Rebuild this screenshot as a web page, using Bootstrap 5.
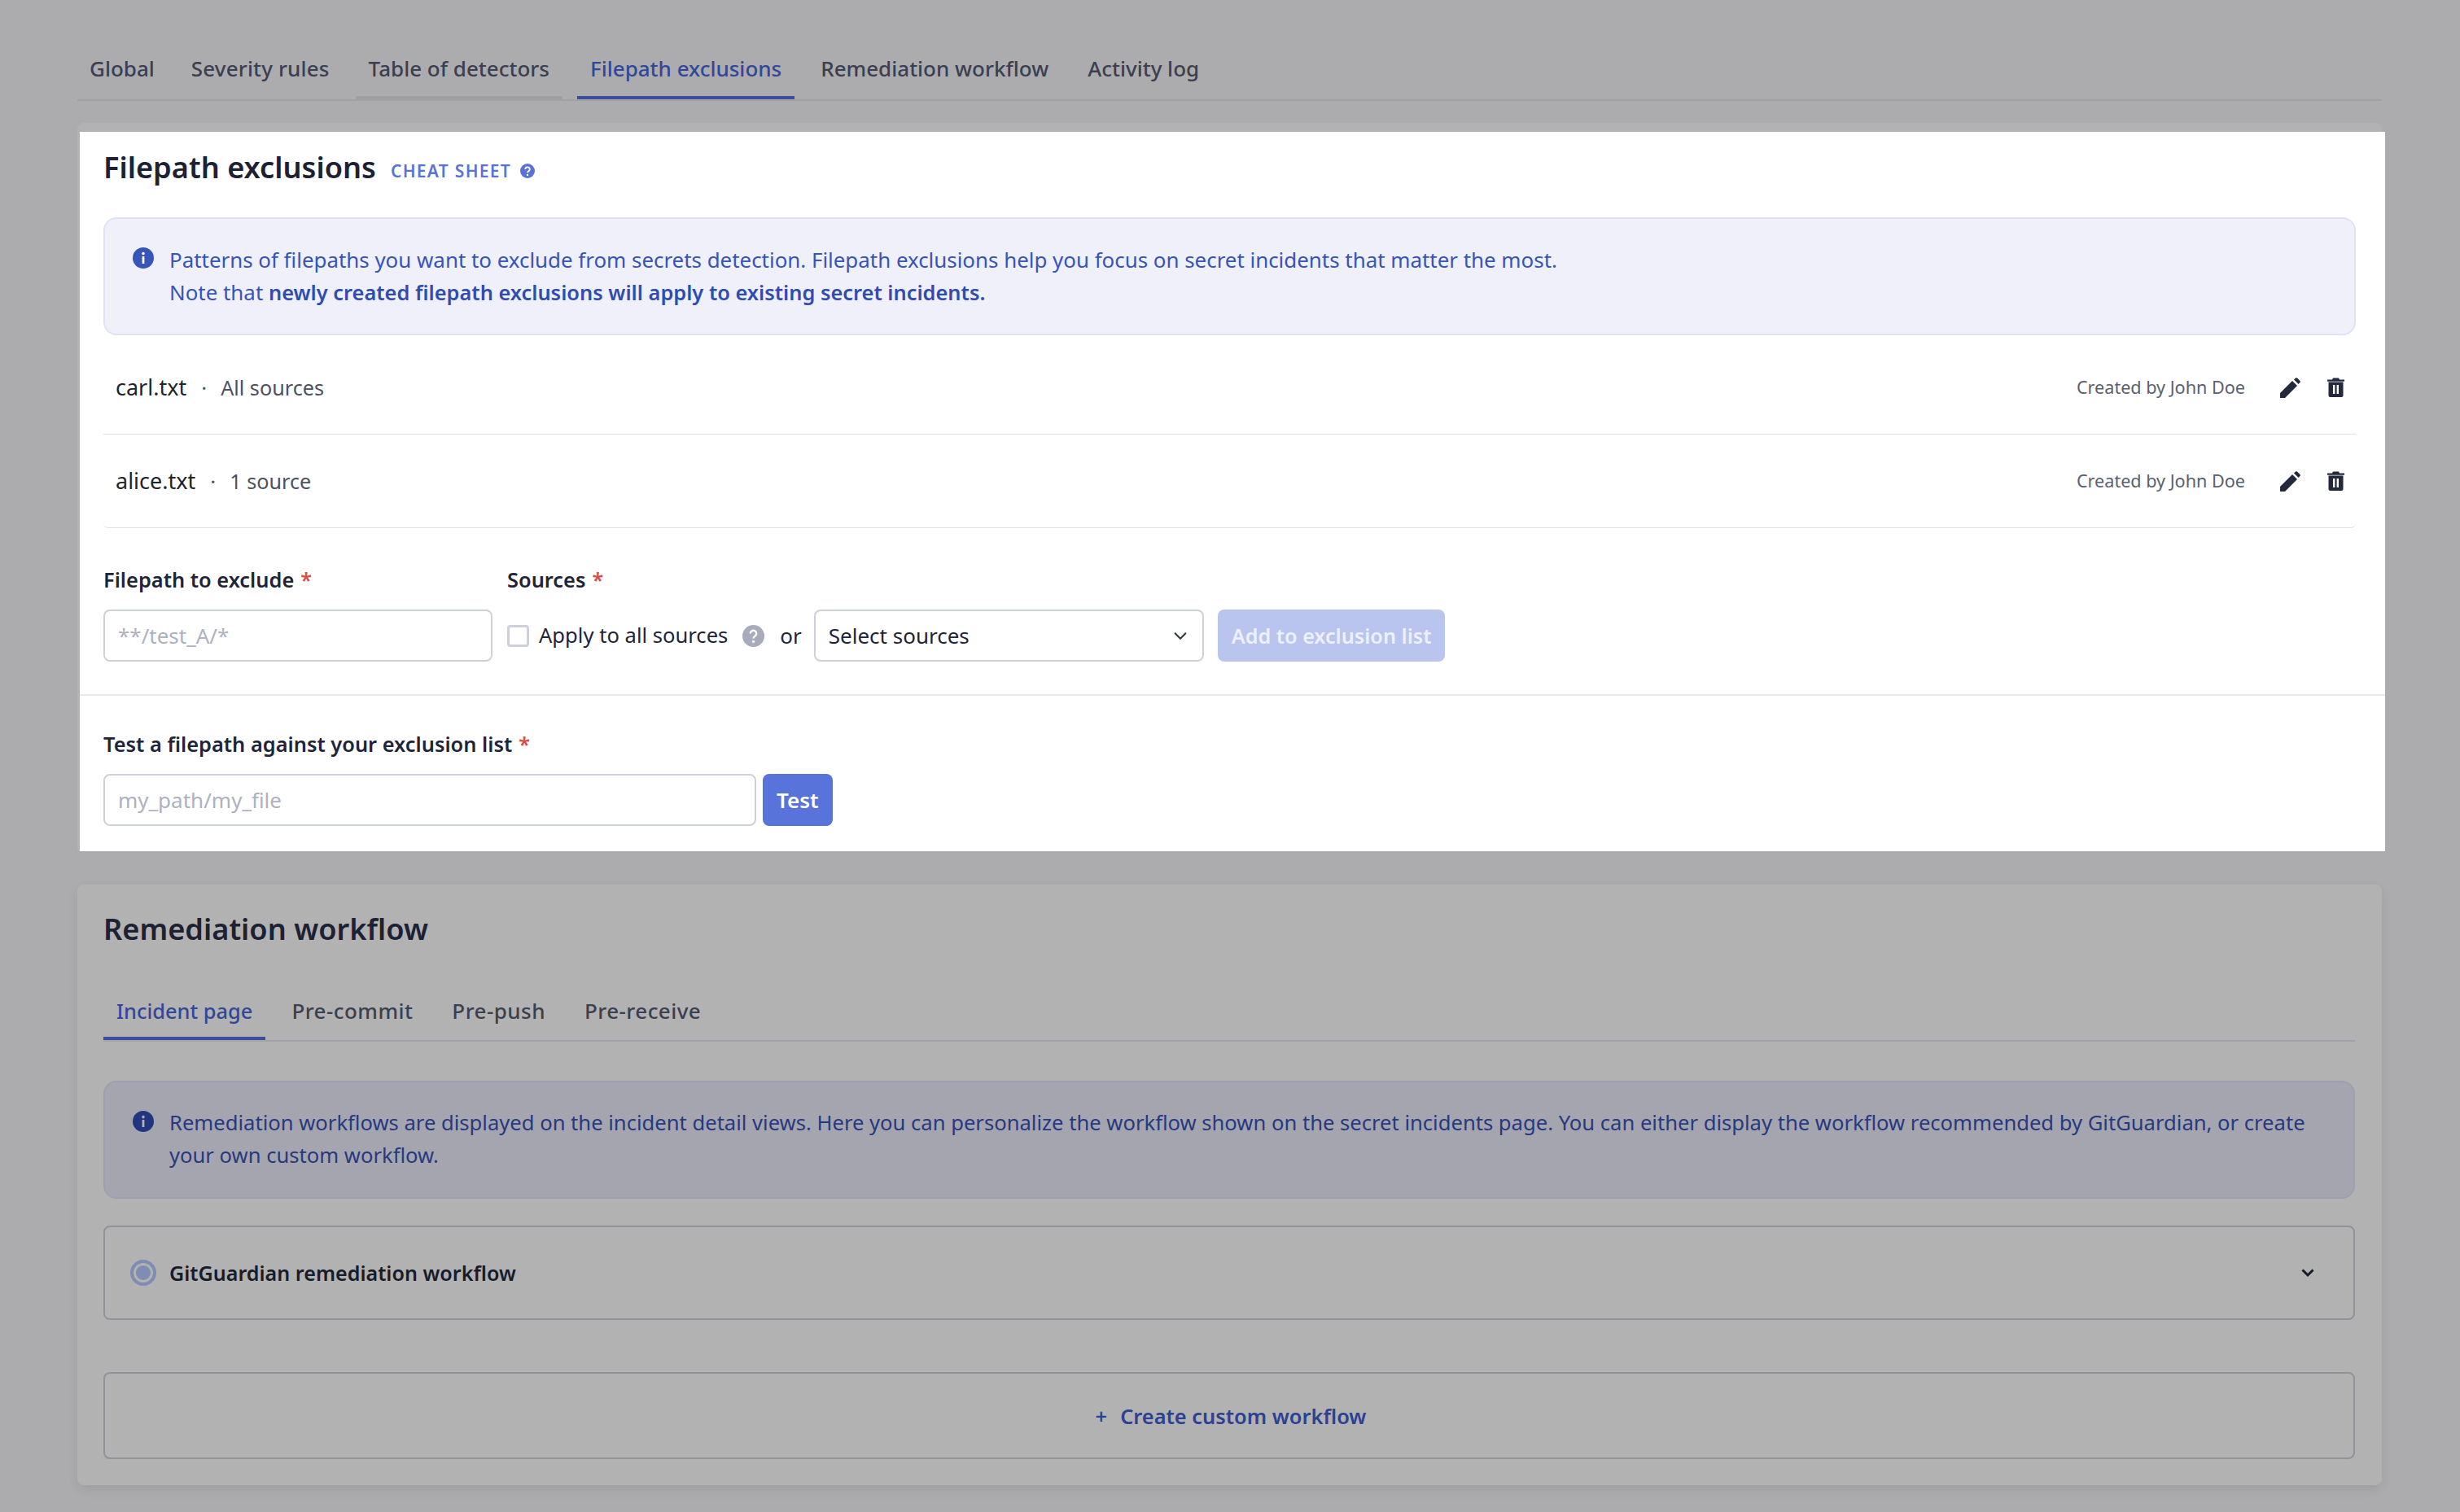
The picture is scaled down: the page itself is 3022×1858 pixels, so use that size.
<!doctype html>
<html lang="en">
<head>
<meta charset="utf-8">
<title>Filepath exclusions</title>
<link href="https://cdn.jsdelivr.net/npm/bootstrap@5.3.0/dist/css/bootstrap.min.css" rel="stylesheet">
<style>
html,body{background:#acacae;}
body{font-family:"Noto Sans","Open Sans",sans-serif;font-size:26px;line-height:40px;color:#1f2538;}
.gg-page{padding:54px 96px 33px 95px;background:#acacae;}
.gg-tabs{border-bottom:2px solid #a2a2a6;gap:16px;flex-wrap:nowrap;}
.gg-tabs .nav-link{font-size:26px;line-height:40px;font-weight:500;padding:10px 16px 14px;border:0;border-bottom:4px solid transparent;border-radius:0;color:#3b3f4f;background:none;margin:0;white-space:nowrap;}
.gg-tabs .nav-link.active{color:#32479a;border-bottom-color:#3a4f9b;background:none;}
.gg-tabs .nav-link.gg-hover{border-bottom-color:#a0a0a2;}
.gg-tabs .nav-link.gg-t1{margin-left:-1px;}
.gg-tabs .nav-link.gg-t2{margin-left:-3px;letter-spacing:.15px;}
.gg-tabs .nav-link.gg-t4{margin-left:2px;}
.gg-shell{margin-top:27px;background:#b2b2b2;border-radius:8px 8px 0 0;padding-top:11px;}
.gg-lit{background:#fff;margin-left:3px;margin-right:-4px;color:#1f2538;}
.gg-top{padding:19px 36px 40px 29px;border-bottom:2px solid #e9eaf0;}
.gg-bottom{padding:39px 36px 31px 29px;}
.gg-h{font-size:36.2px;line-height:47px;font-weight:600;margin:0;color:#1c2133;}
.gg-cheat{font-size:21px;font-weight:600;letter-spacing:1.3px;color:#5a72d8;text-decoration:none;margin-left:18px;margin-top:9px;}
.gg-q{width:18px;height:18px;margin-left:11px;}
.gg-alert{display:flex;gap:19px;padding:30px 34px 31px 34px;border:2px solid #e0e2f6;background:#eff0fa;color:#3654b9;border-radius:16px;margin:37px 0 7px;font-size:25.9px;}
.gg-alert b{font-weight:600;color:#2f4cb0;font-size:25.4px;}
.gg-ico{width:26px;height:26px;flex:none;margin-top:5px;}
.gg-row{height:115px;border-bottom:2px solid #e8e9f0;padding:0 14px 0 15px;background:transparent;border-radius:0;}
.gg-name{font-size:27px;}
.gg-row .gg-sub{color:#4c5162;font-size:25.2px;}
.gg-by{font-size:21.6px;color:#5a6070;margin-right:43px;}
.gg-dot{margin:0 17px 0 18px;color:#4c5162;}
.gg-pen{width:25px;height:25px;margin-right:33px;}
.gg-bin{width:21px;height:24px;}
.gg-lab{font-size:25.4px;font-weight:600;line-height:40px;margin:0 0 17px;display:block;color:#1f2538;}
.gg-star{color:#d94b4b;margin-left:8px;}
.gg-in{height:64px;border:2px solid #cfd1da;border-radius:8px;font-size:26px;padding:0 16px;color:#1f2538;}
.gg-in::placeholder{color:#aeb1c0;}
.gg-w1{width:478px;flex:none;}
.gg-check .gg-box{width:27px;height:27px;border:3px solid #cfd1da;border-radius:4px;margin:0;flex:none;float:none;}
.gg-check{display:flex;align-items:center;gap:12px;padding:0;margin:0;min-height:0;}
.gg-check label{font-size:25.6px;white-space:nowrap;}
.gg-qq{width:27px;height:27px;margin-left:18px;flex:none;}
.gg-or{margin:0 15px 0 19px;font-size:26px;}
.gg-sel{width:479px;flex:none;height:64px;border:2px solid #cfd1da;border-radius:8px;font-size:26px;padding:0 40px 0 16px;color:#1f2538;background-position:right 16px center;background-size:22px 17px;}
.gg-btn{height:64px;border:0;border-radius:8px;background:#5873d9;color:#fff;font-size:26px;font-weight:600;line-height:64px;padding:0 17px;white-space:nowrap;}
.gg-btn:disabled{background:#b9c4ef;color:#eef0fb;opacity:1;font-size:25.2px;}
.gg-w2{width:802px;flex:none;}
.gg-card2{margin-top:41px;background:#b2b2b2;border-radius:8px;padding:31px 33px 32px 32px;box-shadow:0 6px 14px rgba(0,0,0,.07);color:#171b2b;}
.gg-tabs2{margin-top:45px;}
.gg-tabs2 .nav-link{padding:12px 16px;letter-spacing:.45px;}
.gg-tabs2 .nav-link.active{font-size:25.4px;letter-spacing:0;}
.gg-alert2{display:flex;gap:19px;padding:30px 34px 31px 34px;border:2px solid #a09fb0;background:#a5a5af;color:#27397f;border-radius:16px;margin:48px 0 33px;font-size:25.6px;}
.gg-bx{border:2px solid #929298;border-radius:8px;background:transparent;}
.gg-bx1{height:116px;padding:0 48px 0 31px;font-weight:600;font-size:25.1px;}
.gg-bx2{height:107px;margin-top:64px;padding-left:4px;color:#2b4192;font-weight:600;font-size:25.4px;}
.gg-plus{margin-right:16px;}
.gg-radio{width:32px;height:32px;margin-right:16px;flex:none;}
.gg-chev{width:16px;height:12px;}
.gg-form{margin-top:43px;gap:18px;}
.gg-add{margin-left:17px;}
</style>
</head>
<body>
<div class="gg-page">
  <ul class="nav gg-tabs">
    <li class="nav-item"><a class="nav-link gg-t1" href="#">Global</a></li>
    <li class="nav-item"><a class="nav-link gg-t2" href="#">Severity rules</a></li>
    <li class="nav-item"><a class="nav-link gg-hover" href="#">Table of detectors</a></li>
    <li class="nav-item"><a class="nav-link active gg-t4" href="#">Filepath exclusions</a></li>
    <li class="nav-item"><a class="nav-link" href="#">Remediation workflow</a></li>
    <li class="nav-item"><a class="nav-link" href="#">Activity log</a></li>
  </ul>

  <div class="gg-shell">
    <div class="gg-lit">
      <div class="gg-top">
        <div class="d-flex align-items-center">
          <h2 class="gg-h">Filepath exclusions</h2>
          <a class="gg-cheat" href="#">CHEAT SHEET</a>
          <svg class="gg-q mt-2" viewBox="0 0 18 18"><circle cx="9" cy="9" r="9" fill="#5a72d8"/><path d="M6.3 7a2.7 2.7 0 1 1 4 2.4c-.9.5-1.3.9-1.3 1.8" fill="none" stroke="#fff" stroke-width="1.8"/><circle cx="9" cy="14" r="1.2" fill="#fff"/></svg>
        </div>
        <div class="gg-alert">
          <svg class="gg-ico" viewBox="0 0 26 26"><circle cx="13" cy="13" r="13" fill="#3654b9"/><circle cx="13" cy="7.6" r="1.8" fill="#fff"/><rect x="11.6" y="11" width="2.8" height="9" fill="#fff"/></svg>
          <div>Patterns of filepaths you want to exclude from secrets detection. Filepath exclusions help you focus on secret incidents that matter the most.<br>Note that <b>newly created filepath exclusions will apply to existing secret incidents.</b></div>
        </div>
        <ul class="list-group">
          <li class="list-group-item border-0 gg-row d-flex align-items-center border-bottom">
            <span class="gg-name">carl.txt</span><span class="gg-dot">·</span><span class="gg-sub">All sources</span>
            <span class="gg-by ms-auto">Created by John Doe</span>
            <svg class="gg-pen" viewBox="0 0 25 25"><path fill="#23283c" d="M0 25v-6L15 4l6 6L6 25z"/><path fill="#23283c" d="M17 2.5 19 .6q1-.8 2 0l3.4 3.4q.9 1 0 2L22.5 8z"/></svg>
            <svg class="gg-bin" viewBox="0 0 21 24"><path fill="#23283c" d="M0 2.5h6L7 .5h7l1 2h6v2.3H0z"/><path fill="#23283c" fill-rule="evenodd" d="M1.5 5.6h18V22q0 2-2 2h-14q-2 0-2-2zM7 9v11h2.4V9zm4.6 0v11H14V9z"/></svg>
          </li>
          <li class="list-group-item border-0 gg-row d-flex align-items-center border-bottom">
            <span class="gg-name">alice.txt</span><span class="gg-dot">·</span><span class="gg-sub">1 source</span>
            <span class="gg-by ms-auto">Created by John Doe</span>
            <svg class="gg-pen" viewBox="0 0 25 25"><path fill="#23283c" d="M0 25v-6L15 4l6 6L6 25z"/><path fill="#23283c" d="M17 2.5 19 .6q1-.8 2 0l3.4 3.4q.9 1 0 2L22.5 8z"/></svg>
            <svg class="gg-bin" viewBox="0 0 21 24"><path fill="#23283c" d="M0 2.5h6L7 .5h7l1 2h6v2.3H0z"/><path fill="#23283c" fill-rule="evenodd" d="M1.5 5.6h18V22q0 2-2 2h-14q-2 0-2-2zM7 9v11h2.4V9zm4.6 0v11H14V9z"/></svg>
          </li>
        </ul>
        <div class="d-flex align-items-end gg-form">
          <div class="gg-w1">
            <label class="gg-lab">Filepath to exclude<span class="gg-star">*</span></label>
            <input class="form-control gg-in" placeholder="**/test_A/*">
          </div>
          <div>
            <label class="gg-lab">Sources<span class="gg-star">*</span></label>
            <div class="d-flex align-items-center">
              <div class="form-check gg-check"><input class="form-check-input gg-box" type="checkbox" id="gg1"><label for="gg1">Apply to all sources</label></div>
              <svg class="gg-qq" viewBox="0 0 27 27"><circle cx="13.5" cy="13.5" r="13.5" fill="#a8abbb"/><path d="M9.8 10.5a3.7 3.7 0 1 1 5.6 3.2c-1.3.8-1.9 1.3-1.9 2.7" fill="none" stroke="#fff" stroke-width="2.4"/><circle cx="13.5" cy="20.4" r="1.6" fill="#fff"/></svg>
              <span class="gg-or">or</span>
              <select class="form-select gg-sel"><option>Select sources</option></select>
              <button class="btn gg-btn gg-add" disabled>Add to exclusion list</button>
            </div>
          </div>
        </div>
      </div>
      <div class="gg-bottom">
        <label class="gg-lab">Test a filepath against your exclusion list<span class="gg-star">*</span></label>
        <div class="d-flex align-items-center gap-2">
          <input class="form-control gg-in gg-w2" placeholder="my_path/my_file">
          <button class="btn gg-btn">Test</button>
        </div>
      </div>
    </div>
  </div>

  <div class="gg-card2">
    <h2 class="gg-h">Remediation workflow</h2>
    <ul class="nav gg-tabs gg-tabs2">
      <li class="nav-item"><a class="nav-link active" href="#">Incident page</a></li>
      <li class="nav-item"><a class="nav-link" href="#">Pre-commit</a></li>
      <li class="nav-item"><a class="nav-link" href="#">Pre-push</a></li>
      <li class="nav-item"><a class="nav-link" href="#">Pre-receive</a></li>
    </ul>
    <div class="gg-alert2">
      <svg class="gg-ico" viewBox="0 0 26 26"><circle cx="13" cy="13" r="13" fill="#22367f"/><circle cx="13" cy="7.6" r="1.8" fill="#b0b0b5"/><rect x="11.6" y="11" width="2.8" height="9" fill="#b0b0b5"/></svg>
      <div>Remediation workflows are displayed on the incident detail views. Here you can personalize the workflow shown on the secret incidents page. You can either display the workflow recommended by GitGuardian, or create your own custom workflow.</div>
    </div>
    <div class="gg-bx gg-bx1 d-flex align-items-center">
      <svg class="gg-radio" viewBox="0 0 32 32"><circle cx="16" cy="16" r="14" fill="none" stroke="#7f8db5" stroke-width="4"/><circle cx="16" cy="16" r="9" fill="#7f8db5"/></svg>
      <span>GitGuardian remediation workflow</span>
      <svg class="gg-chev ms-auto" viewBox="0 0 16 12"><path d="M1.5 2.5 8 9l6.5-6.5" fill="none" stroke="#171b2b" stroke-width="3"/></svg>
    </div>
    <div class="gg-bx gg-bx2 d-flex align-items-center justify-content-center">
      <span><span class="gg-plus">+</span>Create custom workflow</span>
    </div>
  </div>
</div>
<script src="https://cdn.jsdelivr.net/npm/bootstrap@5.3.0/dist/js/bootstrap.bundle.min.js"></script>
</body>
</html>
